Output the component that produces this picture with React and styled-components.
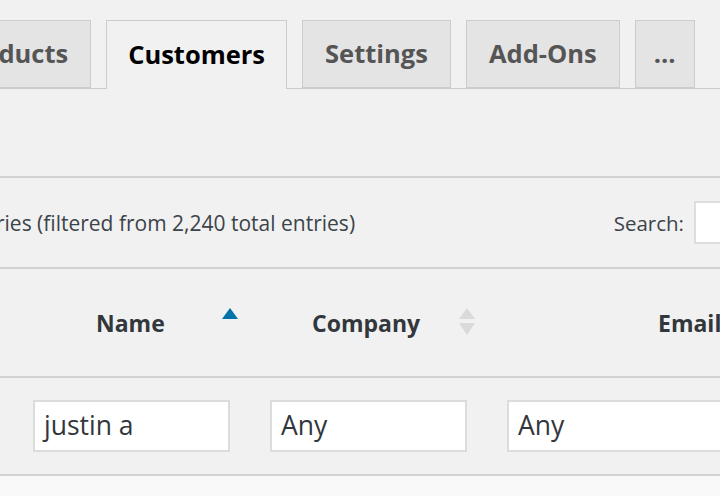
import React from "react";
import styled, { createGlobalStyle } from "styled-components";

const Global = createGlobalStyle`
  html, body {
    margin: 0;
    padding: 0;
    background: #f1f1f1;
    overflow: hidden;
  }
  body {
    font-family: "Open Sans", "Noto Sans", sans-serif;
    color: #444;
  }
`;

const Page = styled.div`
  width: 720px;
  height: 496px;
  overflow: hidden;
  background: #f1f1f1;
  display: flex;
  flex-direction: column;
`;

const TabBar = styled.nav`
  display: flex;
  align-items: flex-end;
  gap: 15px;
  margin-top: 20px;
  height: 69px;
  border-bottom: 1px solid #ccc;
  box-sizing: border-box;
`;

const Tab = styled.div`
  flex: none;
  box-sizing: border-box;
  height: ${(p) => (p.$active ? "69px" : "68px")};
  margin-bottom: ${(p) => (p.$active ? "-1px" : "0")};
  margin-left: ${(p) => p.$offset || 0}px;
  padding: 0 ${(p) => p.$pad || 22}px 3px;
  display: flex;
  align-items: center;
  border: 1px solid #ccc;
  border-bottom: ${(p) => (p.$active ? "none" : "1px solid #ccc")};
  background: ${(p) => (p.$active ? "#f1f1f1" : "#e4e4e4")};
  color: ${(p) => (p.$active ? "#000" : "#555")};
  font-size: 25.5px;
  font-weight: 700;
  white-space: nowrap;
`;

const Spacer = styled.div`
  height: 87px;
  border-bottom: 2px solid #d2d2d2;
`;

const InfoRow = styled.div`
  height: 89px;
  display: flex;
  align-items: center;
  justify-content: space-between;
  border-bottom: 2px solid #d2d2d2;
  font-size: 21px;
  color: #3c434a;
`;

const Info = styled.div`
  flex: none;
  margin-left: -${(p) => p.$cut}px;
  white-space: nowrap;
`;

const SearchBox = styled.label`
  flex: none;
  display: flex;
  align-items: center;
  gap: 10px;
  margin-right: -40px;
  font-size: 20.5px;
`;

const SearchInput = styled.div`
  width: 66px;
  height: 43px;
  box-sizing: border-box;
  background: #fff;
  border: 2px solid #ddd;
  border-right: none;
`;

const HeadRow = styled.div`
  height: 107px;
  display: flex;
  align-items: center;
  border-bottom: 2px solid #d2d2d2;
  font-size: 23px;
  font-weight: 700;
  color: #32373c;
`;

const HeadCell = styled.div`
  flex: none;
  display: flex;
  align-items: center;
  justify-content: space-between;
  width: ${(p) => p.$w}px;
  margin-left: ${(p) => p.$ml}px;
  white-space: nowrap;
`;

const SortIcon = styled.svg`
  width: 16px;
  height: 28px;
  flex: none;
  margin-top: -1px;
`;

const FilterRow = styled.div`
  height: 96px;
  display: flex;
  align-items: center;
  gap: 40px;
  padding-left: 33px;
  border-bottom: 2px solid #d2d2d2;
`;

const FilterInput = styled.div`
  flex: none;
  width: ${(p) => p.$w || 197}px;
  height: 52px;
  box-sizing: border-box;
  background: #fff;
  border: 2px solid #dcdcdc;
  display: flex;
  align-items: center;
  padding: 0 0 2px 9px;
  font-size: 26.5px;
  color: #32373c;
`;

const Body = styled.div`
  flex: 1;
  background: #f9f9f9;
`;

function SortBoth() {
  return (
    <SortIcon viewBox="0 0 16 28">
      <polygon points="8,0 16,11 0,11" fill="#dadada" />
      <polygon points="0,15 16,15 8,27" fill="#dadada" />
    </SortIcon>
  );
}

function SortAsc() {
  return (
    <SortIcon viewBox="0 0 16 28">
      <polygon points="8,0 16,11 0,11" fill="#0073aa" />
    </SortIcon>
  );
}

export default function App() {
  return (
    <Page>
      <Global />
      <TabBar>
        <Tab $offset={-68}>Products</Tab>
        <Tab $active $pad={21}>Customers</Tab>
        <Tab>Settings</Tab>
        <Tab>Add-Ons</Tab>
        <Tab $pad={18}>...</Tab>
      </TabBar>
      <Spacer />
      <InfoRow>
        <Info $cut={142}>Showing 1 entries (filtered from 2,240 total entries)</Info>
        <SearchBox>
          Search:
          <SearchInput />
        </SearchBox>
      </InfoRow>
      <HeadRow>
        <HeadCell $w={142} $ml={96}>
          Name
          <SortAsc />
        </HeadCell>
        <HeadCell $w={163} $ml={74}>
          Company
          <SortBoth />
        </HeadCell>
        <HeadCell $w={120} $ml={183}>
          Email
        </HeadCell>
      </HeadRow>
      <FilterRow>
        <FilterInput>justin a</FilterInput>
        <FilterInput>Any</FilterInput>
        <FilterInput $w={260}>Any</FilterInput>
      </FilterRow>
      <Body />
    </Page>
  );
}
